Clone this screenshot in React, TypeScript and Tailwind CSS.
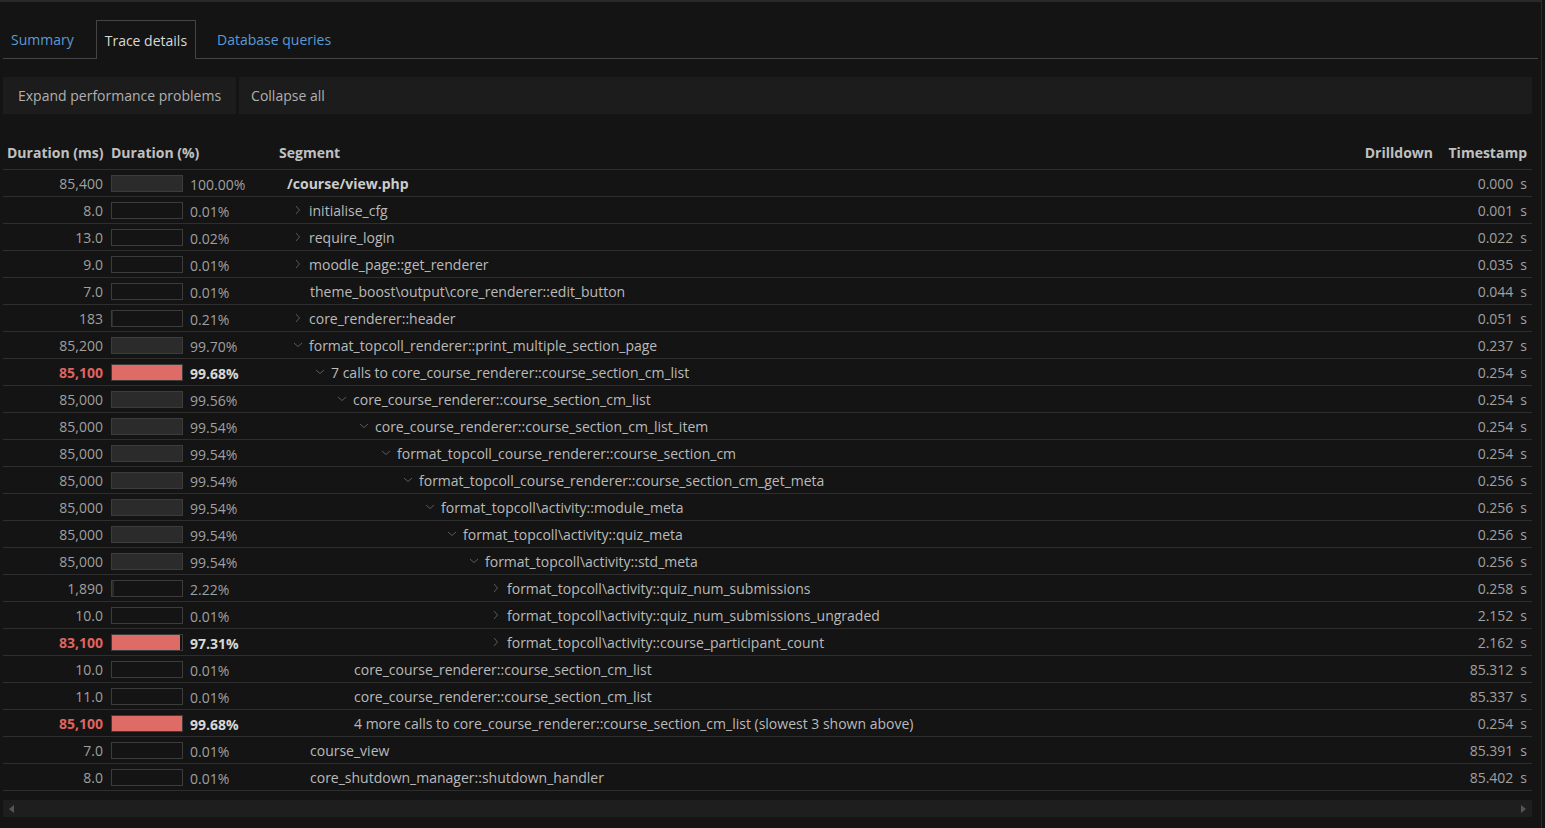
import React from "react";

type Row = {
  ms: string;
  pct: number;
  pctText: string;
  seg: string;
  depth: number;
  chev?: "right" | "down";
  slow?: boolean;
  bold?: boolean;
  ts: string;
};

const rows: Row[] = [
  { ms: "85,400", pct: 100, pctText: "100.00%", seg: "/course/view.php", depth: 0, bold: true, ts: "0.000" },
  { ms: "8.0", pct: 0.01, pctText: "0.01%", seg: "initialise_cfg", depth: 1, chev: "right", ts: "0.001" },
  { ms: "13.0", pct: 0.02, pctText: "0.02%", seg: "require_login", depth: 1, chev: "right", ts: "0.022" },
  { ms: "9.0", pct: 0.01, pctText: "0.01%", seg: "moodle_page::get_renderer", depth: 1, chev: "right", ts: "0.035" },
  { ms: "7.0", pct: 0.01, pctText: "0.01%", seg: "theme_boost\\output\\core_renderer::edit_button", depth: 1, ts: "0.044" },
  { ms: "183", pct: 0.21, pctText: "0.21%", seg: "core_renderer::header", depth: 1, chev: "right", ts: "0.051" },
  { ms: "85,200", pct: 99.7, pctText: "99.70%", seg: "format_topcoll_renderer::print_multiple_section_page", depth: 1, chev: "down", ts: "0.237" },
  { ms: "85,100", pct: 99.68, pctText: "99.68%", seg: "7 calls to core_course_renderer::course_section_cm_list", depth: 2, chev: "down", slow: true, ts: "0.254" },
  { ms: "85,000", pct: 99.56, pctText: "99.56%", seg: "core_course_renderer::course_section_cm_list", depth: 3, chev: "down", ts: "0.254" },
  { ms: "85,000", pct: 99.54, pctText: "99.54%", seg: "core_course_renderer::course_section_cm_list_item", depth: 4, chev: "down", ts: "0.254" },
  { ms: "85,000", pct: 99.54, pctText: "99.54%", seg: "format_topcoll_course_renderer::course_section_cm", depth: 5, chev: "down", ts: "0.254" },
  { ms: "85,000", pct: 99.54, pctText: "99.54%", seg: "format_topcoll_course_renderer::course_section_cm_get_meta", depth: 6, chev: "down", ts: "0.256" },
  { ms: "85,000", pct: 99.54, pctText: "99.54%", seg: "format_topcoll\\activity::module_meta", depth: 7, chev: "down", ts: "0.256" },
  { ms: "85,000", pct: 99.54, pctText: "99.54%", seg: "format_topcoll\\activity::quiz_meta", depth: 8, chev: "down", ts: "0.256" },
  { ms: "85,000", pct: 99.54, pctText: "99.54%", seg: "format_topcoll\\activity::std_meta", depth: 9, chev: "down", ts: "0.256" },
  { ms: "1,890", pct: 2.22, pctText: "2.22%", seg: "format_topcoll\\activity::quiz_num_submissions", depth: 10, chev: "right", ts: "0.258" },
  { ms: "10.0", pct: 0.01, pctText: "0.01%", seg: "format_topcoll\\activity::quiz_num_submissions_ungraded", depth: 10, chev: "right", ts: "2.152" },
  { ms: "83,100", pct: 97.31, pctText: "97.31%", seg: "format_topcoll\\activity::course_participant_count", depth: 10, chev: "right", slow: true, ts: "2.162" },
  { ms: "10.0", pct: 0.01, pctText: "0.01%", seg: "core_course_renderer::course_section_cm_list", depth: 3, ts: "85.312" },
  { ms: "11.0", pct: 0.01, pctText: "0.01%", seg: "core_course_renderer::course_section_cm_list", depth: 3, ts: "85.337" },
  { ms: "85,100", pct: 99.68, pctText: "99.68%", seg: "4 more calls to core_course_renderer::course_section_cm_list (slowest 3 shown above)", depth: 3, slow: true, ts: "0.254" },
  { ms: "7.0", pct: 0.01, pctText: "0.01%", seg: "course_view", depth: 1, ts: "85.391" },
  { ms: "8.0", pct: 0.01, pctText: "0.01%", seg: "core_shutdown_manager::shutdown_handler", depth: 1, ts: "85.402" },
];

const cols = "grid grid-cols-[104px_167px_1fr_100px_91px]";

function Chevron({ dir }: { dir: "right" | "down" }) {
  return (
    <svg width="10" height="10" viewBox="0 0 10 10" className="-ml-[3px] overflow-visible">
      {dir === "right" ? (
        <polyline points="3,1 6.5,5 3,9" fill="none" stroke="#5a5a5a" strokeWidth="1" />
      ) : (
        <polyline points="1,3 5,6.5 9,3" fill="none" stroke="#5a5a5a" strokeWidth="1" />
      )}
    </svg>
  );
}

function Bar({ pct, slow }: { pct: number; slow?: boolean }) {
  return (
    <div className="h-[17px] w-[72px] border border-[#3c3c3c]">
      <div
        className={slow ? "h-full bg-[#df6b67]" : "h-full bg-[#2b2b2b]"}
        style={{ width: `${pct}%` }}
      />
    </div>
  );
}

export default function App() {
  return (
    <div
      className="h-screen w-full overflow-hidden bg-[#141414] text-[14px]"
      style={{ fontFamily: '"Open Sans", "Liberation Sans", sans-serif' }}
    >
      <div className="h-full w-[1542px] border-t-2 border-r border-[#2a2a2a] px-[3px]">
        {/* tabs */}
        <div className="mt-[18px] flex h-[39px] gap-[14px] border-b border-[#444]">
          <div className="flex items-center px-2 text-[#5a9ad6]">Summary</div>
          <div className="-mb-px flex items-center border border-b-0 border-[#444] bg-[#141414] px-2 text-[#d8d8d8]">
            Trace details
          </div>
          <div className="flex items-center pl-[7px] pr-2 text-[#5a9ad6]">Database queries</div>
        </div>

        {/* buttons */}
        <div className="mt-[18px] flex h-[37px] w-[1529px] gap-[3px]">
          <div className="flex items-center bg-[#1c1c1c] px-[15px] text-[#b0b0b0]">
            Expand performance problems
          </div>
          <div className="flex flex-1 items-center bg-[#1c1c1c] px-[12px] text-[#b0b0b0]">
            Collapse all
          </div>
        </div>

        {/* table */}
        <div className="mt-[21px] w-[1529px]">
          <div className={`${cols} h-[35px] items-center border-b border-[#2e2e2e] font-bold text-[#c0c0c0]`}>
            <div className="pl-[4px] whitespace-nowrap">Duration (ms)</div>
            <div className="pl-[4px] whitespace-nowrap">Duration (%)</div>
            <div className="pl-[5px]">Segment</div>
            <div className="pr-2 text-right">Drilldown</div>
            <div className="pr-[5px] text-right">Timestamp</div>
          </div>
          {rows.map((r, i) => (
            <div key={i} className={`${cols} h-[27px] items-center border-b border-[#2e2e2e]`}>
              <div
                className={
                  r.slow
                    ? "pr-[4px] text-right font-bold text-[#df6460]"
                    : "pr-[4px] text-right text-[#a0a0a0]"
                }
              >
                {r.ms}
              </div>
              <div className="flex items-center pl-[4px]">
                <Bar pct={r.pct} slow={r.slow} />
                <span
                  className={
                    r.slow
                      ? "ml-[7px] pt-[3px] font-bold text-[#d8d8d8]"
                      : "ml-[7px] pt-[3px] text-[#a0a0a0]"
                  }
                >
                  {r.pctText}
                </span>
              </div>
              <div className="flex items-center whitespace-nowrap" style={{ paddingLeft: r.depth * 22 }}>
                <div className="flex w-[13px] shrink-0 items-center">
                  {r.chev && <Chevron dir={r.chev} />}
                </div>
                <span
                  className={
                    r.bold
                      ? "font-bold text-[#cccccc]"
                      : r.chev
                        ? "text-[#bababa]"
                        : "pl-px text-[#bababa]"
                  }
                >
                  {r.seg}
                </span>
              </div>
              <div />
              <div className="flex justify-end pr-[5px] text-[#a0a0a0]">
                <span>{r.ts}</span>
                <span className="ml-[7px]">s</span>
              </div>
            </div>
          ))}
        </div>

        {/* horizontal scrollbar */}
        <div className="mt-[9px] flex h-[17px] w-[1529px] items-center justify-between bg-[#1e1e1e] px-[6px]">
          <svg width="5" height="8" viewBox="0 0 5 8">
            <polygon points="5,0 0,4 5,8" fill="#555" />
          </svg>
          <svg width="5" height="8" viewBox="0 0 5 8">
            <polygon points="0,0 5,4 0,8" fill="#555" />
          </svg>
        </div>
      </div>
    </div>
  );
}
